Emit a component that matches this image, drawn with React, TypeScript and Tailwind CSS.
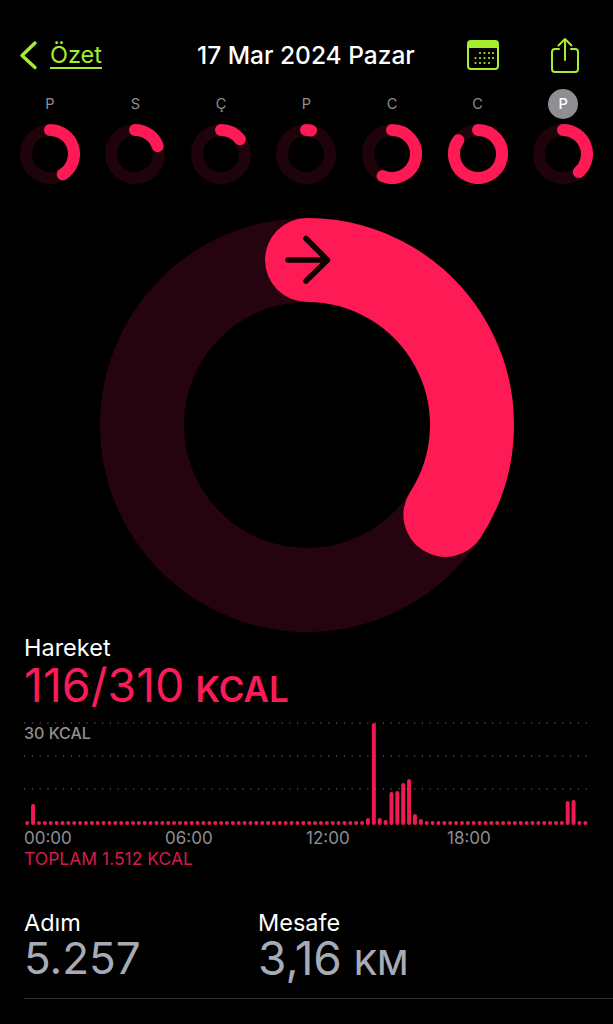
const PINK = "#fd1a55";
const TRACK = "#25030f";
const MINI_TRACK = "#1e030b";

// one label + how far the ring got, in degrees from the top
const WEEK = [
  { label: "P", deg: 148 },
  { label: "S", deg: 71 },
  { label: "Ç", deg: 52 },
  { label: "P", deg: 12 },
  { label: "C", deg: 203 },
  { label: "C", deg: 305 },
  { label: "P", deg: 139, today: true },
];

// 96 quarter hours, only the ones above the resting dot are listed
const SPIKES: Record<number, number> = {
  1: 21, 58: 7, 59: 102, 60: 7, 61: 5, 62: 33, 63: 34, 64: 42, 65: 46, 66: 11, 67: 6, 92: 24, 93: 25,
};
const BARS = Array.from({ length: 96 }, (_, i) => SPIKES[i] ?? 4);

function arcPath(cx: number, cy: number, r: number, deg: number) {
  const a = (deg * Math.PI) / 180;
  const x = cx + r * Math.sin(a);
  const y = cy - r * Math.cos(a);
  return `M ${cx} ${cy - r} A ${r} ${r} 0 ${deg > 180 ? 1 : 0} 1 ${x.toFixed(2)} ${y.toFixed(2)}`;
}

function MiniRing({ deg }: { deg: number }) {
  return (
    <svg width="60" height="60" viewBox="0 0 60 60">
      <circle cx="30" cy="30" r="24" fill="none" stroke={MINI_TRACK} strokeWidth="12" />
      <path d={arcPath(30, 30, 24, deg)} fill="none" stroke={PINK} strokeWidth="12" strokeLinecap="round" />
    </svg>
  );
}

function ActivityChart() {
  return (
    <svg width="565" height="106" viewBox="0 0 565 106" className="block">
      {[1, 34, 67].map((y) => (
        <line key={y} x1="0" x2="565" y1={y} y2={y} stroke="#77777a" strokeWidth="1.2" strokeDasharray="1.2 6.6" />
      ))}
      {BARS.map((h, i) => (
        <rect key={i} x={1.2 + i * 5.875} y={103 - h} width="4" height={h} rx="2" fill="#f01a52" />
      ))}
    </svg>
  );
}

export default function App() {
  return (
    <div
      className="h-[1024px] w-[613px] overflow-hidden bg-black text-white"
      style={{ fontFamily: "Inter, 'Noto Sans', sans-serif" }}
    >
      {/* top bar */}
      <header className="mt-[33px] flex h-[44px] items-center pl-[18px] pr-[32px]">
        <svg width="20" height="30" viewBox="0 0 20 30" className="shrink-0">
          <path d="M17 3 L4 15.500 L17 27.500" fill="none" stroke="#a6ee2b" strokeWidth="3.4" strokeLinecap="round" strokeLinejoin="round" />
        </svg>
        <span className="ml-[12px] text-[23.500px] leading-none text-[#a6ee2b] underline decoration-[1.5px] underline-offset-[4px]">Özet</span>
        <span className="ml-[95px] whitespace-nowrap text-[24.500px] font-medium leading-none">17 Mar 2024 Pazar</span>
        <svg width="34" height="32" viewBox="0 0 34 32" className="ml-auto shrink-0">
          <rect x="2" y="2" width="30" height="28" rx="3" fill="none" stroke="#a6ee2b" strokeWidth="2" />
          <path d="M2 9V5a3 3 0 0 1 3-3h24a3 3 0 0 1 3 3v4z" fill="#a6ee2b" />
          <g fill="#a6ee2b">
            {[[14, 14], [18.5, 14], [23, 14], [27, 14], [9.5, 19], [14, 19], [18.5, 19], [23, 19], [27, 19], [9.5, 24], [14, 24], [18.5, 24], [23, 24]].map(([x, y]) => (
              <circle key={`${x}-${y}`} cx={x} cy={y} r="1.1" />
            ))}
          </g>
        </svg>
        <svg width="32" height="38" viewBox="0 0 32 38" className="ml-[49px] shrink-0">
          <path d="M10 13H6a3 3 0 0 0-3 3v17a3 3 0 0 0 3 3h20a3 3 0 0 0 3-3V16a3 3 0 0 0-3-3h-4" fill="none" stroke="#a6ee2b" strokeWidth="2" strokeLinecap="round" />
          <path d="M16 24V3M9.5 9.500 16 3l6.500 6.500" fill="none" stroke="#a6ee2b" strokeWidth="2" strokeLinecap="round" strokeLinejoin="round" />
        </svg>
      </header>

      {/* week strip */}
      <div className="mt-[12px] grid grid-cols-7 px-[7px]">
        {WEEK.map((d, i) => (
          <div key={i} className="flex flex-col items-center">
            <span
              className={`mb-[5px] flex h-[30px] w-[30px] items-center justify-center rounded-full text-[14.500px] ${
                d.today ? "bg-[#8e8e93] font-medium text-white" : "text-[#8e8e93]"
              }`}
            >
              {d.label}
            </span>
            <MiniRing deg={d.deg} />
          </div>
        ))}
      </div>

      {/* big move ring */}
      <div className="mt-[33px] flex justify-center">
        <svg width="416" height="416" viewBox="0 0 416 416" className="block">
          <circle cx="208" cy="208" r="165" fill="none" stroke={TRACK} strokeWidth="84" />
          <path d={arcPath(208, 208, 165, 123)} fill="none" stroke={PINK} strokeWidth="84" strokeLinecap="round" />
          <path d="M189 43H228M207 21.500 228.500 43 207 64" fill="none" stroke="#0d0104" strokeWidth="5.500" strokeLinecap="round" strokeLinejoin="round" />
        </svg>
      </div>

      {/* move stats */}
      <section className="pl-[24px] pt-[1px]">
        <div className="text-[23.500px] leading-[28px]">Hareket</div>
        <div className="flex items-baseline leading-[46px] text-[#fb1b56]">
          <span className="text-[46.500px]">116/310</span>
          <span className="ml-[11px] text-[35px] font-semibold">KCAL</span>
        </div>

        <div className="relative mt-[10px]">
          <ActivityChart />
          <span className="absolute left-0 top-[1px] text-[16px] font-medium leading-[20px] text-[#8e8e93]">30 KCAL</span>
        </div>
        <div className="grid w-[564px] grid-cols-4 text-[17px] leading-[20px] text-[#8e8e93]">
          <span>00:00</span>
          <span>06:00</span>
          <span>12:00</span>
          <span>18:00</span>
        </div>
        <div className="mt-[1px] text-[17.500px] leading-[20px] text-[#d81a4e]">TOPLAM 1.512 KCAL</div>
      </section>

      {/* steps and distance */}
      <section className="ml-[24px] mt-[41px] flex h-[89px] border-b border-[#333336]">
        <div className="w-[234px]">
          <div className="text-[23.500px] leading-[25px]">Adım</div>
          <div className="text-[44px] leading-[46px] text-[#a6abb5]">5.257</div>
        </div>
        <div>
          <div className="text-[23.500px] leading-[25px]">Mesafe</div>
          <div className="flex items-baseline text-[#a6abb5]">
            <span className="text-[46px] leading-[46px]">3,16</span>
            <span className="ml-[12px] text-[34px] font-medium leading-[46px]">KM</span>
          </div>
        </div>
      </section>
    </div>
  );
}
